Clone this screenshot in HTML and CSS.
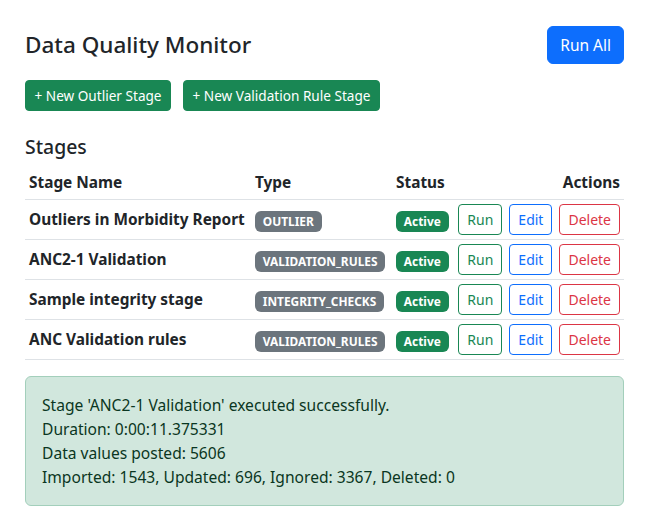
FILE: index.html
```html
<!DOCTYPE html>
<html lang="en">
<head>
<meta charset="utf-8">
<title>Data Quality Monitor</title>
<link rel="stylesheet" href="styles.css">
</head>
<body>
<div class="page">
  <div class="header">
    <h3 class="title">Data Quality Monitor</h3>
    <button class="btn btn-primary">Run All</button>
  </div>
  <div class="create-row">
    <button class="btn btn-sm btn-success">+ New Outlier Stage</button>
    <button class="btn btn-sm btn-success">+ New Validation Rule Stage</button>
  </div>
  <h5 class="section-title">Stages</h5>
  <table class="stages">
    <thead>
      <tr>
        <th class="col-name">Stage Name</th>
        <th class="col-type">Type</th>
        <th class="col-status">Status</th>
        <th class="col-actions">Actions</th>
      </tr>
    </thead>
    <tbody>
      <tr>
        <td class="name">Outliers in Morbidity Report</td>
        <td><span class="badge badge-gray">OUTLIER</span></td>
        <td><span class="badge badge-green">Active</span></td>
        <td><div class="actions"><button class="btn btn-sm btn-outline-success">Run</button><button class="btn btn-sm btn-outline-primary">Edit</button><button class="btn btn-sm btn-outline-danger">Delete</button></div></td>
      </tr>
      <tr>
        <td class="name">ANC2-1 Validation</td>
        <td><span class="badge badge-gray">VALIDATION_RULES</span></td>
        <td><span class="badge badge-green">Active</span></td>
        <td><div class="actions"><button class="btn btn-sm btn-outline-success">Run</button><button class="btn btn-sm btn-outline-primary">Edit</button><button class="btn btn-sm btn-outline-danger">Delete</button></div></td>
      </tr>
      <tr>
        <td class="name">Sample integrity stage</td>
        <td><span class="badge badge-gray">INTEGRITY_CHECKS</span></td>
        <td><span class="badge badge-green">Active</span></td>
        <td><div class="actions"><button class="btn btn-sm btn-outline-success">Run</button><button class="btn btn-sm btn-outline-primary">Edit</button><button class="btn btn-sm btn-outline-danger">Delete</button></div></td>
      </tr>
      <tr>
        <td class="name">ANC Validation rules</td>
        <td><span class="badge badge-gray">VALIDATION_RULES</span></td>
        <td><span class="badge badge-green">Active</span></td>
        <td><div class="actions"><button class="btn btn-sm btn-outline-success">Run</button><button class="btn btn-sm btn-outline-primary">Edit</button><button class="btn btn-sm btn-outline-danger">Delete</button></div></td>
      </tr>
    </tbody>
  </table>
  <div class="alert">
    <div>Stage 'ANC2-1 Validation' executed successfully.</div>
    <div>Duration: 0:00:11.375331</div>
    <div>Data values posted: 5606</div>
    <div>Imported: 1543, Updated: 696, Ignored: 3367, Deleted: 0</div>
  </div>
</div>
</body>
</html>
```
FILE: styles.css
```css
* { box-sizing: border-box; }

body {
  margin: 0;
  background: #fff;
  color: #212529;
  font-family: "Noto Sans", "Open Sans", sans-serif;
  font-size: 15.6px;
  line-height: 24px;
}

.page {
  padding: 26px 28px 0 25px;
}

.header {
  display: flex;
  justify-content: space-between;
  align-items: center;
  margin-bottom: 16px;
}

.title {
  margin: 0;
  font-size: 22.5px;
  font-weight: 500;
  line-height: 30px;
}

.btn {
  display: inline-flex;
  align-items: center;
  justify-content: center;
  font-family: inherit;
  border: 1px solid transparent;
  background: transparent;
  cursor: pointer;
  white-space: nowrap;
}

.btn-primary {
  height: 38px;
  padding: 0 12px;
  font-size: 15.5px;
  color: #fff;
  background: #0d6efd;
  border-color: #0d6efd;
  border-radius: 6px;
}

.btn-sm {
  height: 31px;
  padding: 0 8px;
  font-size: 14px;
  border-radius: 4px;
}

.btn-success {
  color: #fff;
  background: #198754;
  border-color: #198754;
  padding: 0 8.5px;
  font-size: 13.6px;
}

.btn-outline-success { color: #198754; border-color: #198754; }
.btn-outline-primary { color: #0d6efd; border-color: #0d6efd; }
.btn-outline-danger { color: #dc3545; border-color: #dc3545; }

.create-row {
  display: flex;
  gap: 12px;
  margin-bottom: 24px;
}

.section-title {
  margin: 0 0 8px;
  font-size: 19.4px;
  font-weight: 500;
  line-height: 24px;
}

.stages {
  width: 100%;
  border-collapse: collapse;
  table-layout: fixed;
  margin-bottom: 16px;
}

.stages th,
.stages td {
  padding: 4px;
  border-bottom: 1px solid #dee2e6;
  vertical-align: middle;
  text-align: left;
  white-space: nowrap;
}

.stages th {
  font-weight: 700;
  font-size: 15.4px;
}

.col-name { width: 226px; }
.col-type { width: 141px; }
.col-status { width: 62px; }
.stages th.col-actions { text-align: right; }

.name {
  font-weight: 700;
  font-size: 15.4px;
}

.badge {
  display: inline-block;
  padding: 4.5px 7.8px;
  font-size: 11.9px;
  font-weight: 700;
  line-height: 12px;
  color: #fff;
  border-radius: 6px;
  vertical-align: middle;
}

.badge-gray { background: #6c757d; }
.badge-green { background: #198754; }

.actions {
  display: flex;
  justify-content: flex-end;
  gap: 7px;
}

.alert {
  padding: 16px;
  background: #d1e7dd;
  border: 1px solid #a3cfbb;
  border-radius: 6px;
  color: #0a3622;
}
```
